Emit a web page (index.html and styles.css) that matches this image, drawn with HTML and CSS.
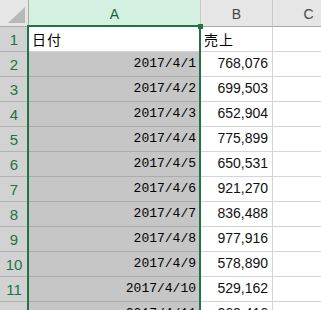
FILE: index.html
```html
<!DOCTYPE html>
<html lang="ja">
<head>
    <meta charset="UTF-8">
    <title>売上</title>
    <link rel="stylesheet" href="styles.css">
</head>
<body>
    <div class="sheet">
        <div class="grid">
            <div class="hd corner"><svg width="28" height="26" viewBox="0 0 28 26"><polygon points="8,22 25,22 25,6" fill="#b8b8b8"/></svg></div>
            <div class="hd col sel">A</div>
            <div class="hd col">B</div>
            <div class="hd col">C</div>

            <div class="rh">1</div><div class="c active txt">日付</div><div class="c txt">売上</div><div class="c"></div>
            <div class="rh">2</div><div class="c pick date">2017/4/1</div><div class="c num">768,076</div><div class="c"></div>
            <div class="rh">3</div><div class="c pick date">2017/4/2</div><div class="c num">699,503</div><div class="c"></div>
            <div class="rh">4</div><div class="c pick date">2017/4/3</div><div class="c num">652,904</div><div class="c"></div>
            <div class="rh">5</div><div class="c pick date">2017/4/4</div><div class="c num">775,899</div><div class="c"></div>
            <div class="rh">6</div><div class="c pick date">2017/4/5</div><div class="c num">650,531</div><div class="c"></div>
            <div class="rh">7</div><div class="c pick date">2017/4/6</div><div class="c num">921,270</div><div class="c"></div>
            <div class="rh">8</div><div class="c pick date">2017/4/7</div><div class="c num">836,488</div><div class="c"></div>
            <div class="rh">9</div><div class="c pick date">2017/4/8</div><div class="c num">977,916</div><div class="c"></div>
            <div class="rh">10</div><div class="c pick date">2017/4/9</div><div class="c num">578,890</div><div class="c"></div>
            <div class="rh">11</div><div class="c pick date">2017/4/10</div><div class="c num">529,162</div><div class="c"></div>
            <div class="rh">12</div><div class="c pick date">2017/4/11</div><div class="c num">363,416</div><div class="c"></div>
        </div>
        <div class="selection"></div>
        <div class="handle"></div>
    </div>
</body>
</html>
```

FILE: styles.css
```css
body {
    margin: 0;
    overflow: hidden;
    background: #ffffff;
}
.sheet {
    position: relative;
    width: 321px;
    height: 310px;
    overflow: hidden;
}
.grid {
    display: grid;
    grid-template-columns: 29px 172px 72px 72px;
    grid-template-rows: 27px;
    grid-auto-rows: 25px;
    width: 345px;
}
.grid > div {
    box-sizing: border-box;
    border-right: 1px solid #d4d4d4;
    border-bottom: 1px solid #d4d4d4;
    display: flex;
    overflow: hidden;
    white-space: nowrap;
}
.hd {
    background: #e6e6e6;
    align-items: center;
    justify-content: center;
    font-family: "Liberation Sans", Arial, sans-serif;
    font-size: 14px;
    color: #444444;
}
.grid > .hd {
    border-right-color: #c8c8c8;
    border-bottom-color: #ababab;
}
.grid > .corner {
    border-right-color: #ababab;
    padding-top: 1px;
}
.col {
    padding-top: 2px;
}
.grid > .sel {
    background: #d3f0e0;
    color: #1f5f3c;
    border-bottom: 2px solid #217346;
}
.grid > .rh {
    background: #d2d2d2;
    border-right-color: #ababab;
    border-bottom-color: #b4b4b4;
    align-items: center;
    justify-content: center;
    font-family: "Liberation Sans", Arial, sans-serif;
    font-size: 15px;
    color: #217346;
}
.c {
    align-items: flex-end;
    padding: 0 4px 5px 3px;
    color: #000000;
}
.grid > .pick {
    background: #c6c6c6;
    border-bottom-color: #acacac;
}
.active {
    background: #ffffff;
}
.txt {
    font-family: "Noto Sans CJK JP", sans-serif;
    font-size: 14px;
    letter-spacing: 1px;
    line-height: 16px;
    padding-bottom: 4px;
}
.date {
    justify-content: flex-end;
    font-family: "Liberation Mono", monospace;
    font-size: 13px;
    line-height: 14px;
}
.num {
    justify-content: flex-end;
    font-family: "Liberation Sans", Arial, sans-serif;
    font-size: 14px;
    line-height: 15px;
    color: #111111;
}
.selection {
    position: absolute;
    left: 27px;
    top: 25px;
    width: 170px;
    height: 400px;
    border: 2px solid #217346;
}
.handle {
    position: absolute;
    left: 198px;
    top: 24px;
    width: 5px;
    height: 5px;
    background: #217346;
}
```
